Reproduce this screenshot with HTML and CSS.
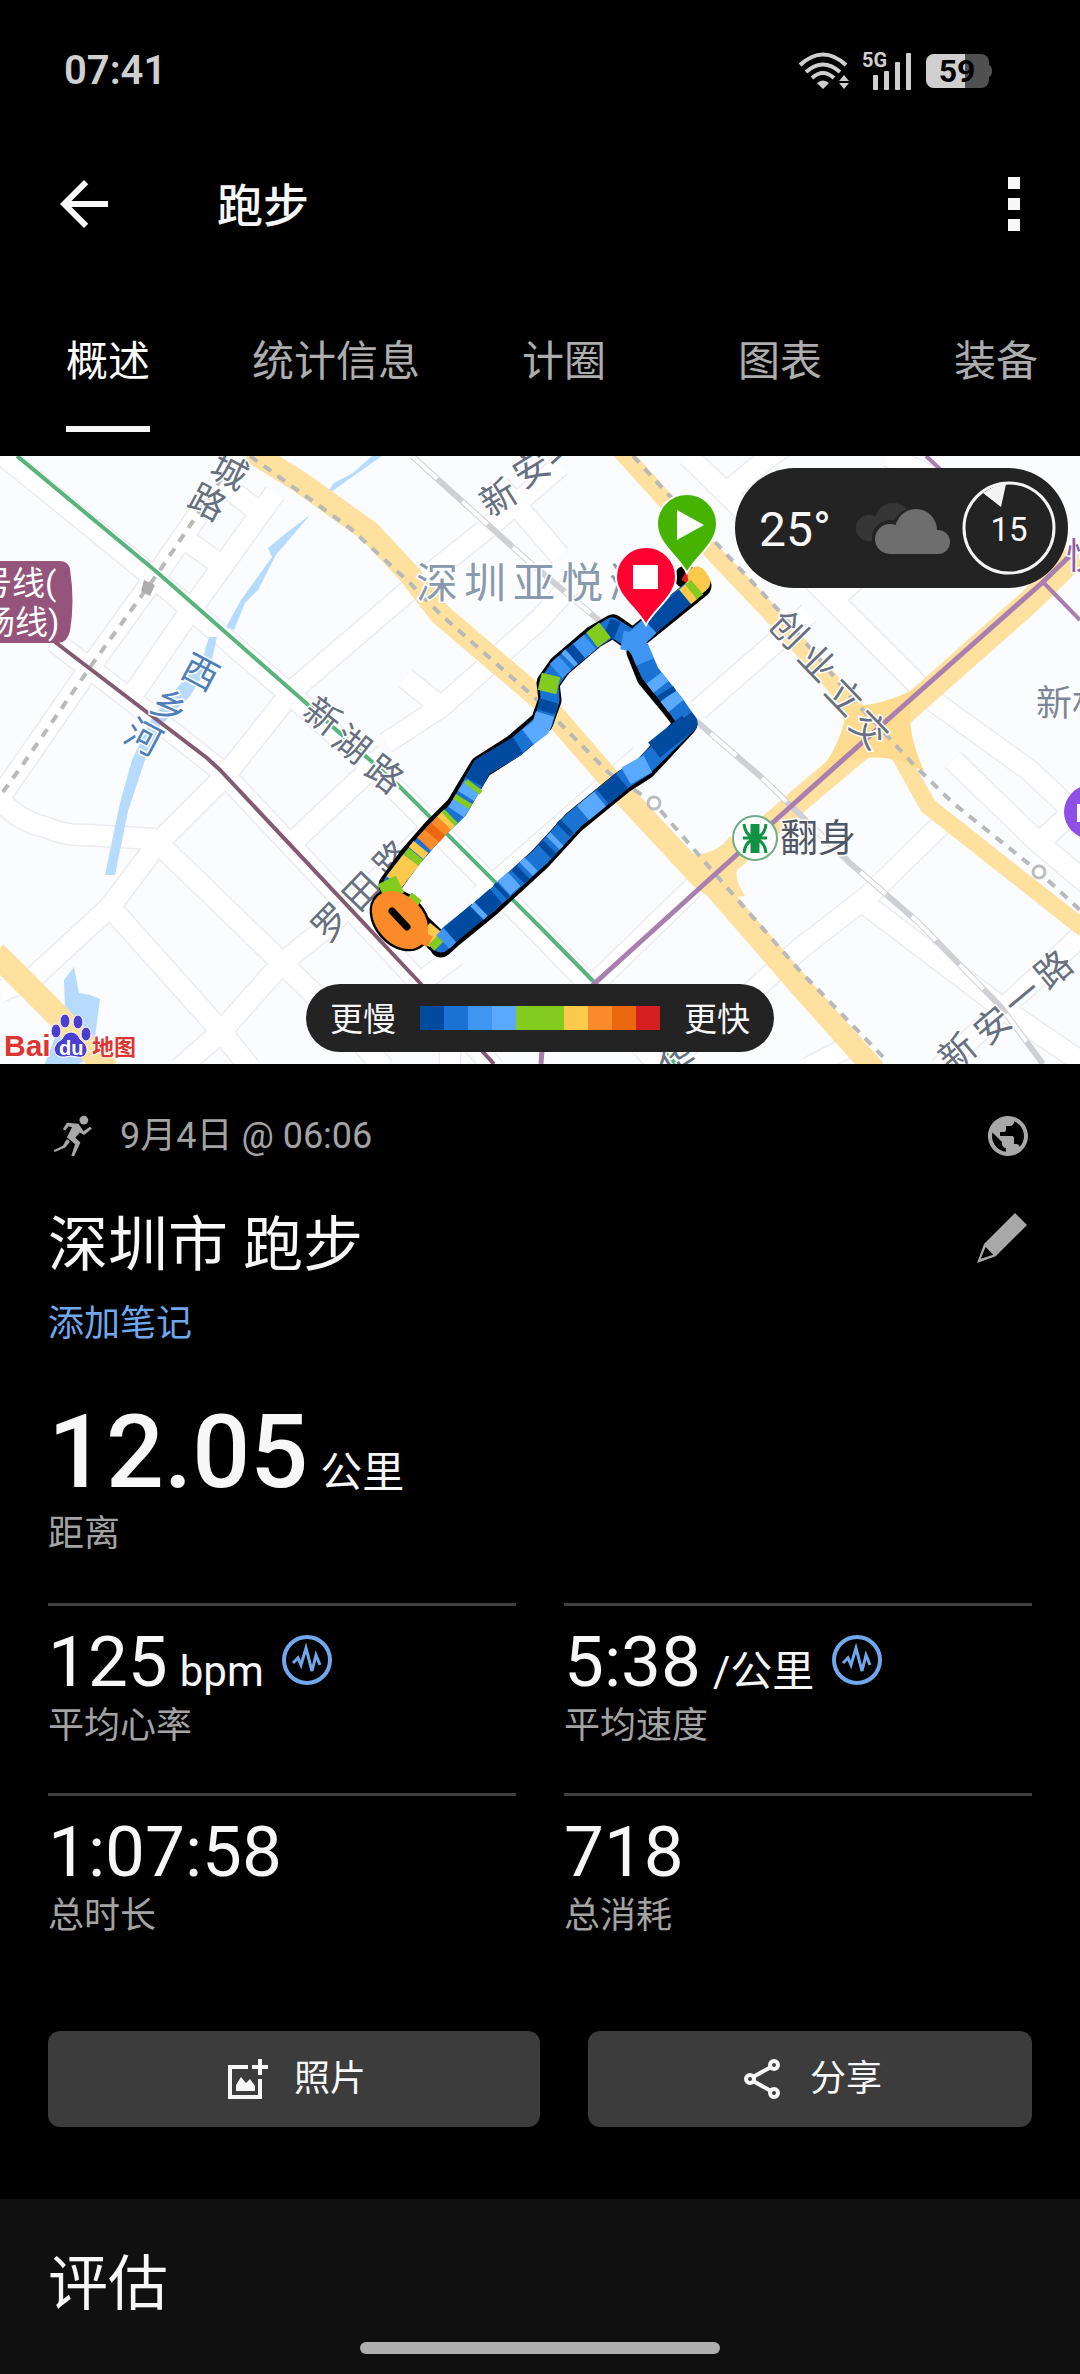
FILE: index.html
```html
<!DOCTYPE html>
<html lang="zh-CN">
  <head>
    <meta charset="utf-8">
    <meta name="viewport" content="width=device-width, initial-scale=1">
    <title>跑步</title>
    <link rel="stylesheet" href="styles.css">
  </head>
  <body>
    <div class="statusbar">
      <span class="clock">07:41</span>
      <div class="status-icons">
        <svg width="51" height="36" viewBox="0 0 51 36" fill="none" stroke="#cfcfcf" stroke-width="4">
          <path d="M1 12Q24-9 47 12M7 19Q24 4 41 19M13 25Q24 15 35 25"/>
          <path fill="#cfcfcf" stroke="none" d="M24 36l-6-6q6-5 12 0zM45 22l5 6h-10zM45 36l5-6h-10z"/>
        </svg>
        <svg width="48" height="37" viewBox="0 0 48 37" fill="#cfcfcf">
          <text class="net" x="-2" y="14">5G</text>
          <rect x="9" y="22" width="5" height="15" rx="1"/><rect x="20" y="18" width="5" height="19" rx="1"/>
          <rect x="31" y="9" width="5" height="28" rx="1"/><rect x="42" y="0" width="5" height="37" rx="1"/>
        </svg>
        <svg width="66" height="34" viewBox="0 0 66 34">
          <rect width="63" height="34" rx="8" fill="#505050"/>
          <path fill="#505050" d="M63 11q3 1 3 6t-3 6z"/>
          <path fill="#cfcfcf" d="M8 0h31v34H8a8 8 0 0 1-8-8V8a8 8 0 0 1 8-8z"/>
          <text class="battery" x="31" y="28">59</text>
        </svg>
      </div>
    </div>

    <header class="appbar">
      <button class="icon-btn" aria-label="返回">
        <svg width="72" height="72" viewBox="0 0 24 24" fill="#f7f7f7"><path d="M20 11H7.83l5.59-5.59L12 4l-8 8 8 8 1.41-1.41L7.83 13H20v-2z"/></svg>
      </button>
      <h1>跑步</h1>
      <button class="icon-btn" aria-label="更多">
        <svg width="12" height="54" viewBox="0 0 12 54" fill="#f7f7f7"><path d="M0 0h12v12H0zM0 21h12v12H0zM0 42h12v12H0z"/></svg>
      </button>
    </header>

    <nav class="tabs">
      <a href="#overview" class="tab active"><span>概述</span></a>
      <a href="#stats" class="tab"><span>统计信息</span></a>
      <a href="#laps" class="tab"><span>计圈</span></a>
      <a href="#charts" class="tab"><span>图表</span></a>
      <a href="#gear" class="tab"><span>装备</span></a>
    </nav>

    <div class="map">
      <svg class="map-canvas" viewBox="0 0 1080 608">
        <defs>
          <g id="streets" fill="none">
            <path d="M0 536L34 521L110 451L158 387L224 321L293 234L406 137L489 71L560 10"/>
            <path d="M0 344Q20 366 45 371Q65 380 86 379L155 383"/>
            <path d="M158 387L220 447L282 507L344 567L384 612"/>
            <path d="M110 451L220 574L250 612M180 612L220 577L282 507L327 471L445 360"/>
            <path d="M386 297L362 321L295 384M386 287L441 251L540 163L570 130"/>
            <path d="M441 251L405 222"/>
            <path d="M275 37L186 161L134 237M186 84L222 110M227 31L260 57"/>
            <path d="M220 27L158 117L93 207L21 311L-8 352"/>
            <path d="M4 0L158 125L300 247L398 336L540 478L600 540L660 612"/>
            <path d="M55 186L148 257L220 314L420 527L494 612M420 527L455 500M450 540L450 612"/>
            <path d="M688 0L726 37L833 144L936 247L1029 314L1080 362M726 37L770 0L800 -20"/>
            <path d="M809 157L698 254M833 144L870 110M480 440L640 300M595 527L700 425"/>
            <path d="M946 364L867 441L802 491L712 571L660 612M808 612L850 590"/>
            <path d="M953 304L1039 387L1090 430M1039 387L1090 340"/>
            <path d="M860 444L1005 554L1090 612M1090 471L1005 551L940 612"/>
            <path d="M888 0L930 20L1010 100M500 30L560 100"/>
          </g>
        </defs>
        <rect width="1080" height="608" fill="#fafcff"/>
        <use href="#streets" stroke="#ececf0" stroke-width="23" stroke-linejoin="round"/>
        <use href="#streets" stroke="#fff" stroke-width="20" stroke-linejoin="round"/>

        <!-- river and pond -->
        <g fill="#b6dbff">
          <path d="M382 0L362 14L324 41L334 27L353 17L372 0z"/>
          <path d="M310 59L290 74L268 92L272 101L241 144L226 171L234 174L245 147L258 134L276 99z"/>
          <path d="M217 181L212 204L190 240L160 270L145 304L128 355L115 419L105 419L115 371L120 347L132 304L152 262L203 201L209 181z"/>
          <path d="M74 511L79 537L90 539L100 543L93 597L79 608H45L65 554L64 524z"/>
        </g>

        <!-- main roads -->
        <g fill="none" stroke="#fee09f" stroke-linejoin="round">
          <path stroke-width="22" d="M250 -5L300 26L370 76L410 119L440 158L540 243L619 334L700 421L714 431L800 530L875 614"/>
          <path stroke-width="17" d="M618 -8L700 83L774 161L850 247L900 300L928 350L1084 473"/>
          <path stroke-width="24" d="M1084 92L1030 145L900 260L810 335L712 420"/>
          <path stroke-width="24" d="M-5 497L60 562L108 614"/>
        </g>
        <path fill="#fedb8f" d="M840 252Q880 250 908 236L930 226L910 250Q908 280 924 315L908 308Q880 296 845 306L815 322Q840 290 845 262z"/>
        <path fill="#fee09f" d="M690 398Q716 400 730 380L745 400Q728 415 745 440L712 445z"/>

        <!-- railway -->
        <g fill="none">
          <path stroke="#cfcfd6" stroke-width="6" d="M412 0L527 104L602 167L695 264L760 320L850 407L919 467L1001 551L1043 608"/>
          <path stroke="#fff" stroke-width="4" stroke-dasharray="34 34" d="M412 0L527 104L602 167L695 264L760 320L850 407L919 467L1001 551L1043 608"/>
          <g stroke="#b9b9b9" stroke-width="4" stroke-dasharray="9 8">
            <path d="M222 22L158 117L93 207L21 311L0 340"/>
            <path d="M250 0L350 72L410 127L440 158L534 241L609 317L654 347L716 419L800 515L888 606"/>
            <path d="M633 0L666 36L716 87L781 157L850 240L915 310L953 347L1039 416L1080 454"/>
          </g>
        </g>
        <path fill="#adadad" d="M144 124l11 5-5 11-9-5z"/>
        <g fill="#fff" stroke="#bdbdbd" stroke-width="3"><circle cx="654" cy="347" r="6"/><circle cx="1039" cy="416" r="6"/></g>

        <!-- metro lines -->
        <g fill="none" stroke-width="5">
          <path stroke="#57b47c" stroke-width="4" d="M17 0L158 117L306 247L398 329L540 471L595 527L680 612"/>
          <path stroke="#835a72" stroke-width="4" d="M55 186L148 257L207 302L220 314L420 527L494 608"/>
          <g stroke="#a87fae"><path d="M1080 90L1043 126L884 267L712 421L595 527L543 580L541 608"/><path stroke-width="4" d="M1043 126L1080 164M926 0L940 13"/></g>
        </g>

        <g class="label">
          <text transform="translate(229 16) rotate(28)">城</text>
          <text transform="translate(207 47) rotate(28)">路</text>
          <text transform="translate(499 42) rotate(-32)">新</text>
          <text transform="translate(532 14) rotate(-32)">安</text>
          <text transform="translate(565 -2) rotate(-42)">一</text>
          <text transform="translate(322 261) rotate(38)">新</text>
          <text transform="translate(351 289) rotate(38)">湖</text>
          <text transform="translate(384 319) rotate(38)">路</text>
          <text transform="translate(331 467) rotate(-46)">罗</text>
          <text transform="translate(362 436) rotate(-46)">田</text>
          <text transform="translate(393 404) rotate(-46)">路</text>
          <text transform="translate(788 174) rotate(46)">创</text>
          <text transform="translate(817 207) rotate(46)">业</text>
          <text transform="translate(844 241) rotate(46)">立</text>
          <text transform="translate(869 274) rotate(46)">交</text>
          <text transform="translate(958 597) rotate(-40)">新</text>
          <text transform="translate(993 570) rotate(-40)">安</text>
          <text transform="translate(1023 542) rotate(-40)">一</text>
          <text transform="translate(1054 514) rotate(-40)">路</text>
          <text transform="translate(678 606) rotate(-32)">华</text>
        </g>
        <g class="label water">
          <text transform="translate(200 217) rotate(28)">西</text>
          <text transform="translate(169 251) rotate(28)">乡</text>
          <text transform="translate(143 282) rotate(28)">河</text>
        </g>
        <g class="label area"><text x="437" y="127">深</text><text x="485" y="127">圳</text><text x="534" y="127">亚</text><text x="582" y="127">悦</text><text x="630" y="127">湾</text></g>
        <text class="label village" x="1072" y="248">新村</text>
        <text class="label plaza" x="1084" y="101">悦</text>
        <text class="label station" x="818" y="382">翻身</text>
        <circle cx="755" cy="382" r="22" fill="#fff" stroke="#6dae83" stroke-width="2"/>
        <path fill="none" stroke="#109243" stroke-width="3" d="M744 368Q745 378 752 381V368M766 368Q765 378 758 381V368M744 397Q745 387 752 384V397M766 397Q765 387 758 384V397M743 382H767M755 368V397"/>
        <circle cx="1091" cy="356" r="27" fill="#8d4fe6"/><path fill="#fff" d="M1077 348h3v18h-3z"/>
        <path fill="#95547b" d="M-4 105H60Q68 105 70 113Q75 146 70 175Q67 187 58 187H-4z"/>
        <g class="line-name"><text x="-21" y="139">号线(</text><text x="-18" y="178">场线)</text></g>

        <!-- track -->
        <g fill="none" stroke-linejoin="round" stroke-linecap="round">
          <path stroke="#000" stroke-width="23" d="M686 121L700 130L653 168L633 184L613 170L594 181L560 210L548 227L550 244L542 266L514 290L481 311L457 351L432 376L411 400L390 429M441 490L452 480L490 449L540 403L574 366L623 326L645 312L686 268L672 250L648 221L638 196M405 455L441 489"/>
          <ellipse cx="400" cy="464" rx="34" ry="25" transform="rotate(48 400 464)" fill="#000" stroke="#000" stroke-width="2"/>
          <path stroke="#1a73d2" stroke-width="19" d="M700 127L653 167L633 184L612 171L595 182L560 211L549 227L550 244L543 267L516 291L482 311L458 354L434 377L413 401L393 427M441 487L451 477L489 447L540 401L574 364L623 324L643 311L688 267L674 247L650 217L640 194L633 184"/>
        </g>
        <g fill="none" stroke-width="19" stroke-linejoin="round">
          <path stroke="#d42020" stroke-width="12" d="M684 119L692 123"/>
          <path stroke="#fbc94b" stroke-linecap="round" d="M697 120L701 126L694 132"/>
          <path stroke="#84cb1f" d="M697 131L691 136"/>
          <path stroke="#fbc94b" d="M691 136L685 141"/>
          <path stroke="#004ba0" d="M685 141L653 167L647 172M617 175L607 171"/>
          <path stroke="#3e95f2" d="M650 170L633 186L622 184M633 184L640 194L645 206M590 186L578 196"/>
          <path stroke="#84cb1f" d="M605 174L592 184M551 219L547 236"/>
          <path stroke="#3e95f2" d="M565 207L556 215"/><path stroke="#58a9ff" d="M572 200L568 204M654 222L661 231M668 240L676 250"/>
          <path stroke="#004ba0" d="M579 195L572 201M549 245L546 256M518 289L482 311L474 326M684 262L688 267L654 294M665 235L668 240"/>
          <path stroke="#58a9ff" d="M545 258L541 271L528 281M648 308L640 312L626 320M473 329L466 340M462 347L456 356"/>
          <path stroke="#84cb1f" d="M475 329L472 333M464 343L461 348M451 360L447 364M416 398L411 404"/>
          <path stroke="#fbc94b" d="M448 363L442 369M421 391L416 397M411 404L394 426"/>
          <path stroke="#fb8b28" d="M444 367L424 388"/><path stroke="#ea6810" d="M438 373L432 380"/>
          <path stroke="#84cb1f" d="M400 428L382 437M406 444L416 452"/>
          <path stroke="#fbc94b" d="M424 474L436 484"/><path stroke="#84cb1f" d="M435 482L441 488"/>
          <path stroke="#3e95f2" d="M443 486L450 479"/>
          <path stroke="#004ba0" d="M450 479L478 455M481 453L496 440M500 436L503 433M518 421L523 416M545 396L550 391M563 374L567 370M603 341L622 325"/>
          <path stroke="#58a9ff" d="M477 457L481 453M504 432L514 423M553 387L557 383M583 357L600 343M526 413L531 408"/>
          <ellipse cx="400" cy="464" rx="23" ry="14" transform="rotate(48 400 464)" stroke="#fb8b28" fill="#fb8b28"/>
          <path stroke="#fb8b28" stroke-width="12" d="M415 478L430 486"/>
          <path stroke="#000" stroke-width="7" stroke-linecap="round" d="M392 455L407 471"/>
        </g>

        <g stroke="#fff" stroke-width="2">
          <path fill="#45b300" d="M687 117C679 101 657 88 657 68A30 30 0 0 1 717 68C717 88 695 101 687 117z"/>
          <path fill="#ff0030" d="M646 169C638 153 616 140 616 121A30 30 0 0 1 676 121C676 140 654 153 646 169z"/>
        </g>
        <path fill="#fff" d="M677 54l27 15-27 15zM633 109h25v24h-25z"/>

        <!-- map provider -->
        <g fill="#4a3fd0" stroke="#fff" stroke-width="1">
          <ellipse cx="65" cy="565" rx="5" ry="7"/><ellipse cx="78" cy="566" rx="5" ry="7"/>
          <ellipse cx="56" cy="575" rx="5" ry="7"/><ellipse cx="86" cy="578" rx="5" ry="7"/>
          <path d="M71 576q6 0 9 7 8 6 7 12-2 8-10 6-6-2-12 0-9 1-11-7 0-6 8-11 3-7 9-7z"/>
        </g>
        <g class="provider"><text x="4" y="600">Bai</text><text class="du" x="59" y="599">du</text><text class="cn" x="92" y="599">地图</text></g>
      </svg>

      <div class="weather">
        <span class="temp">25°</span>
        <svg width="94" height="51" viewBox="0 0 94 51">
          <g fill="#363636"><circle cx="37" cy="18" r="18"/><circle cx="13" cy="25" r="13"/></g>
          <g fill="#6e6e6e">
            <circle cx="60" cy="28" r="24" fill="#232323"/><circle cx="34" cy="35" r="18" fill="#232323"/>
            <circle cx="60" cy="27" r="21"/><circle cx="34" cy="36" r="15"/><circle cx="82" cy="39" r="12"/><path d="M34 30h48v21H34z"/>
          </g>
        </svg>
        <div class="wind">
          <svg width="94" height="94" viewBox="0 0 94 94"><circle cx="47" cy="47" r="45" fill="none" stroke="#f4f4f4" stroke-width="3"/><path fill="#f4f4f4" d="M21 12Q32 4 44 3L39 26z"/></svg>
          <span>15</span>
        </div>
      </div>

      <div class="legend">
        <span>更慢</span>
        <div class="scale"><i class="c1"></i><i class="c2"></i><i class="c3"></i><i class="c4"></i><i class="c5"></i><i class="c5"></i><i class="c6"></i><i class="c7"></i><i class="c8"></i><i class="c9"></i></div>
        <span>更快</span>
      </div>
    </div>

    <main class="summary" id="overview">
      <div class="row meta">
        <svg class="runner" width="40" height="42" viewBox="44 46 112 124" fill="#a8a8a8"><circle cx="132" cy="61" r="13"/><path d="M70 88L82 69L116 72L131 94L150 81L156 86L133 105L120 98L107 113L122 127L103 168L95 166L106 132L82 112L97 82L87 79L77 92zM82 117L91 125L77 142L46 155L43 150L70 137z"/></svg>
        <span class="date">9月4日 @ 06:06</span>
        <svg width="48" height="48" viewBox="0 0 24 24" fill="#a8a8a8"><path d="M12 2C6.48 2 2 6.48 2 12s4.48 10 10 10 10-4.48 10-10S17.52 2 12 2zm-1 17.93c-3.95-.49-7-3.85-7-7.93 0-.62.08-1.21.21-1.79L9 15v1c0 1.100.9 2 2 2v1.930zm6.900-2.540c-.26-.81-1-1.390-1.900-1.390h-1v-3c0-.55-.45-1-1-1H8v-2h2c.55 0 1-.45 1-1V7h2c1.100 0 2-.9 2-2v-.41c2.930 1.190 5 4.060 5 7.410 0 2.080-.8 3.970-2.100 5.390z"/></svg>
      </div>
      <div class="row title">
        <h2>深圳市 跑步</h2>
        <button class="icon-btn edit" aria-label="编辑">
          <svg width="50" height="50" viewBox="51 339 150 150" fill="#a8a8a8" fill-rule="evenodd"><path d="M165 339L201 375L107 469L51 489L72 432zM77 441L62 476L100 464z"/></svg>
        </button>
      </div>
      <a href="#note" class="note">添加笔记</a>

      <div class="distance">
        <div class="value"><b>12.05</b><small>公里</small></div>
        <div class="caption">距离</div>
      </div>

      <div class="stats">
        <div class="stat">
          <div class="value"><span>125</span><small>bpm</small>
            <svg class="pulse" width="50" height="50" viewBox="0 0 50 50"><circle cx="25" cy="25" r="23"/><path d="M11 28L16 23L19 30L24 13L30 36L34 20L38 30"/></svg>
          </div>
          <div class="caption">平均心率</div>
        </div>
        <div class="stat">
          <div class="value"><span>5:38</span><small>/公里</small>
            <svg class="pulse" width="50" height="50" viewBox="0 0 50 50"><circle cx="25" cy="25" r="23"/><path d="M11 28L16 23L19 30L24 13L30 36L34 20L38 30"/></svg>
          </div>
          <div class="caption">平均速度</div>
        </div>
        <div class="stat"><div class="value">1:07:58</div><div class="caption">总时长</div></div>
        <div class="stat"><div class="value">718</div><div class="caption">总消耗</div></div>
      </div>

      <div class="actions">
        <button>
          <svg width="48" height="48" viewBox="0 0 48 48" fill="#f7f7f7"><path d="M6 10h20v4H10v26h26V24h4v20H6zM36 4h4v6h6v4h-6v6h-4v-6h-6v-4h6zM14 36V30l5-8 5 6 4-4 5 7v5z"/></svg>
          照片
        </button>
        <button>
          <svg width="48" height="48" viewBox="0 0 48 48" fill="none" stroke="#f7f7f7" stroke-width="4"><circle cx="36" cy="10" r="4"/><circle cx="12" cy="24" r="4"/><circle cx="36" cy="38" r="4"/><path d="M15 22L33 12M15 26L33 36"/></svg>
          分享
        </button>
      </div>
    </main>

    <section class="review"><h2>评估</h2></section>
    <div class="home-bar"></div>
  </body>
</html>
```
FILE: styles.css
```css
* {box-sizing: border-box;}
body {
  margin: 0;
  min-height: 100vh;
  display: flex;
  flex-direction: column;
  background: #000;
  color: #f7f7f7;
  font-family: Roboto, "Noto Sans CJK SC", sans-serif;
  font-size: 36px;
  line-height: 48px;
  overflow-x: hidden;
}
svg {display: block; flex: none;}
h1, h2 {margin: 0; font-weight: 400;}
h2 {font-size: 60px; line-height: 72px;}
button {font: inherit; color: inherit; border: 0; cursor: pointer;}
a {text-decoration: none;}
.icon-btn {background: none; padding: 0;}

.statusbar {
  height: 120px;
  padding: 22px 88px 0 64px;
  display: flex;
  align-items: center;
  justify-content: space-between;
}
.clock {font-size: 40px; font-weight: 600; color: #cfcfcf;}
.status-icons {display: flex; align-items: center; gap: 14px;}
.status-icons svg {overflow: visible;}
.net {font-size: 20px; font-weight: 700;}
.battery {font-size: 32px; font-weight: 700; text-anchor: middle; fill: #000;}

.appbar {height: 168px; padding: 0 60px 0 48px; display: flex; align-items: center;}
.appbar h1 {flex: 1; margin-left: 97px; padding-top: 3px; font-size: 46px; font-weight: 500;}

.tabs {display: flex; height: 144px; margin-bottom: 24px; overflow: hidden;}
.tab {
  flex: none;
  min-width: 216px;
  padding: 0 36px;
  display: flex;
  justify-content: center;
  font-size: 42px;
  line-height: 148px;
  color: #adadad;
}
.active {color: #fff;}
.active span {border-bottom: 6px solid #f7f7f7; height: 144px;}

.map {position: relative; overflow: hidden;}
.map-canvas {width: 100%; height: auto;}
.label {
  font-size: 36px;
  text-anchor: middle;
  dominant-baseline: central;
  fill: #667080;
  stroke: #fff;
  stroke-width: 3px;
  paint-order: stroke;
}
.water {fill: #4f7fb8;}
.area {font-size: 42px; fill: #8999ae;}
.village {fill: #7b8798;}
.plaza {fill: #8e5fa8;}
.station {font-size: 38px; fill: #4f5665;}
.line-name {font-size: 33px; fill: #fff;}
.provider {font: 700 30px "Liberation Sans", "Noto Sans CJK SC", sans-serif; fill: #dc3532; stroke: #fff; stroke-width: 2px; paint-order: stroke;}
.provider .du {font-size: 20px; fill: #fff; stroke: none;}
.provider .cn {font-size: 22px;}

.weather {
  position: absolute;
  top: 12px;
  right: 12px;
  height: 120px;
  padding: 0 12px 0 24px;
  display: flex;
  align-items: center;
  border-radius: 60px;
  background: #232323;
}
.temp {font-size: 48px; margin-right: 25px; padding-top: 3px;}
.wind {margin-left: 12px; display: grid; place-items: center; font-size: 33px;}
.wind svg, .wind span {grid-area: 1 / 1;}
.wind span {padding-top: 3px;}

.legend {
  position: absolute;
  left: 50%;
  bottom: 12px;
  transform: translateX(-50%);
  height: 68px;
  padding: 0 24px;
  display: flex;
  align-items: center;
  gap: 24px;
  border-radius: 34px;
  background: #232323;
  font-size: 33px;
  white-space: nowrap;
}
.legend span {padding-top: 3px;}
.scale {display: flex;}
.scale i {width: 24px; height: 24px;}
.c1 {background: #004ba0;}
.c2 {background: #1a73d2;}
.c3 {background: #3e95f2;}
.c4 {background: #58a9ff;}
.c5 {background: #84cb1f;}
.c6 {background: #fbc94b;}
.c7 {background: #fb8b28;}
.c8 {background: #ea6810;}
.c9 {background: #d42020;}

.summary {padding: 48px 48px 72px;}
.row {display: flex; align-items: center; justify-content: space-between;}
.meta {margin-bottom: 50px; color: #a3a3a3;}
.runner {margin-left: 5px;}
.date {flex: 1; margin-left: 27px;}
.title {align-items: flex-start;}
.edit {margin: 3px 5px 0 0;}
.note {display: block; margin-top: 18px; color: #6fa8ec;}
.caption {color: #a3a3a3;}
.value {display: flex; align-items: baseline; gap: 12px;}
.value small {font-size: 42px; font-weight: 400; line-height: 42px;}
.distance {margin-top: 46px;}
.distance .value {font-size: 102px; line-height: 116px; height: 116px;}
.distance b {font-weight: 500;}
.stats {display: grid; grid-template-columns: 1fr 1fr; gap: 43px 48px; margin-top: 45px;}
.stat {border-top: 3px solid #404040; padding-top: 16px;}
.stat .value {font-size: 71px; line-height: 80px; height: 80px;}
.pulse {align-self: center; margin: 0 0 4px 6px; fill: none; stroke: #6fa8ec; stroke-width: 4;}
.pulse path {stroke-width: 3;}
.actions {display: grid; grid-template-columns: 41fr 37fr; gap: 48px; margin-top: 91px;}
.actions button {
  height: 96px;
  display: flex;
  align-items: center;
  justify-content: center;
  gap: 24px;
  border-radius: 12px;
  background: #3c3c3c;
}

.review {flex: 1; padding: 50px 48px 53px; background: #101010;}
.home-bar {
  position: fixed;
  left: 50%;
  bottom: 20px;
  transform: translateX(-50%);
  width: 360px;
  height: 12px;
  border-radius: 6px;
  background: #aeaeae;
}
```
